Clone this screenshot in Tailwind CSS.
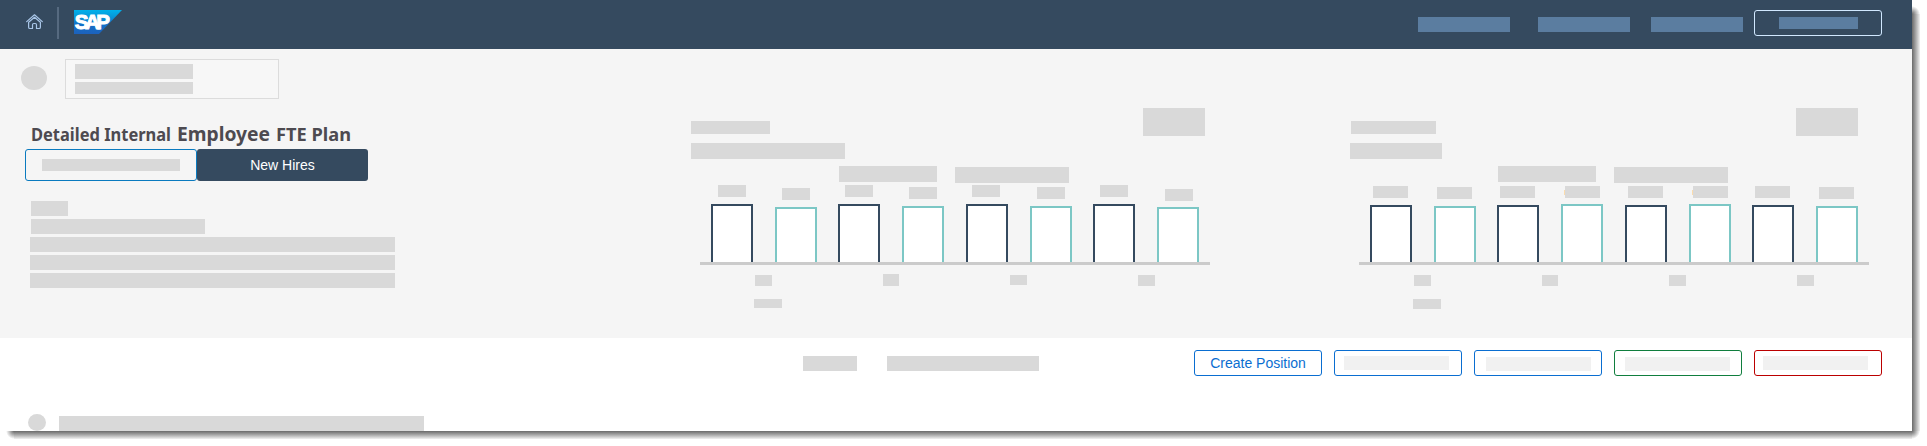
<!DOCTYPE html>
<html lang="en">
<head>
<meta charset="utf-8">
<title>Detailed Internal Employee FTE Plan</title>
<script src="https://cdn.jsdelivr.net/npm/@tailwindcss/browser@4"></script>
</head>
<body class="bg-white w-[1927px] h-[446px] overflow-hidden font-['Liberation_Sans',sans-serif]">
<div class="relative w-[1927px] h-[446px]">
  <!-- window drop shadow -->
  <div class="absolute left-[1912px] top-[14px] w-2 h-[417px] bg-linear-to-r from-[#6a6a6a] to-[#f2f2f2]"></div>
  <div class="absolute left-[14px] top-[431px] w-[1898px] h-2 bg-linear-to-b from-[#6a6a6a] to-[#f2f2f2]"></div>
  <div class="absolute left-[6px] top-[431px] w-2 h-2 bg-radial-[at_100%_0%] from-[#6a6a6a] to-white to-70%"></div>
  <div class="absolute left-[1912px] top-[431px] w-2 h-2 bg-radial-[at_0%_0%] from-[#6a6a6a] to-white to-70%"></div>
  <div class="absolute left-[1912px] top-[6px] w-2 h-2 bg-radial-[at_0%_100%] from-[#6a6a6a] to-white to-70%"></div>

  <main class="relative w-[1912px] h-[431px] bg-white overflow-hidden flex flex-col">
    <header class="h-[49px] shrink-0 bg-[#354a5f] flex items-start">
      <svg class="ml-[26px] mt-[14px] w-[17px] h-[16px]" viewBox="0 0 17 16" fill="none" stroke="#a9c6e8" stroke-width="1.2" stroke-linejoin="round" stroke-linecap="round"><path d="M.7 7.6 8.5.8l7.8 6.8"/><path d="M2.6 8.2v5c0 .9.5 1.3 1.3 1.3h2.6v-3.700c0-.9.6-1.300 1.300-1.300h1.400c.8 0 1.300.5 1.300 1.300v3.700h2.600c.9 0 1.300-.5 1.300-1.300v-5L8.500 3.300z"/></svg>
      <div class="ml-[14px] mt-[7px] w-[2px] h-8 bg-[#566a80]"></div>
      <svg class="ml-[15px] mt-[10px] w-12 h-6" viewBox="0 0 48 24"><defs><linearGradient id="g" x1="0" y1="0" x2="0" y2="1"><stop offset="0" stop-color="#00b1eb"/><stop offset=".25" stop-color="#069bdb"/><stop offset=".6" stop-color="#1170c8"/><stop offset="1" stop-color="#1d61bc"/></linearGradient></defs><path d="M0 0h48L25 24H0z" fill="url(#g)"/><text y="19" font-family="Liberation Sans" font-weight="700" font-size="20.500" fill="#fff" stroke="#fff" stroke-width="1"><tspan x=".8">S</tspan><tspan x="11">A</tspan><tspan x="22.200">P</tspan></text></svg>
      <div class="ml-auto mt-[17px] w-[92px] h-[15px] bg-[#5b7da0]"></div>
      <div class="ml-7 mt-[17px] w-[92px] h-[15px] bg-[#5b7da0]"></div>
      <div class="ml-[21px] mt-[17px] w-[92px] h-[15px] bg-[#5b7da0]"></div>
      <div class="ml-[11px] mr-[30px] mt-[10px] w-32 h-[26px] rounded-[3px] border border-[#d1e8ff] pl-6 pt-[6px]"><div class="w-[79px] h-3 bg-[#5b7da0]"></div></div>
    </header>

    <section class="h-[289px] shrink-0 bg-[#f5f5f5] flex items-start">
      <div class="w-[691px] shrink-0 flex flex-col">
        <div class="flex">
          <div class="ml-[21px] mt-[17px] w-[26px] h-6 rounded-[50%] bg-[#d9d9d9]"></div>
          <div class="ml-[18px] mt-[10px] w-[214px] h-10 border border-[#dcdcdc] bg-[#f7f7f7] pl-[9px] pt-1 flex flex-col gap-[3px]">
            <div class="w-[118px] h-[15px] bg-[#d9d9d9]"></div>
            <div class="w-[118px] h-3 bg-[#d9d9d9]"></div>
          </div>
        </div>
        <svg class="ml-[25px] mt-[20px] w-[343px] h-[30px]" fill="#4d4a50" font-family="Noto Sans" font-weight="700"><text x="6" y="22" font-size="18" textLength="140" lengthAdjust="spacingAndGlyphs">Detailed Internal</text><text x="152" y="22" font-size="20" textLength="93" lengthAdjust="spacingAndGlyphs">Employee</text><text x="251" y="22" font-size="18" textLength="75" lengthAdjust="spacingAndGlyphs">FTE Plan</text></svg>
        <div class="ml-[25px] flex">
          <div class="w-[172px] h-8 border border-[#0a7abf] rounded-[3px] pl-4 pt-[9px]"><div class="w-[138px] h-3 bg-[#d9d9d9]"></div></div>
          <div class="w-[171px] h-8 rounded-[3px] bg-[#354a5f] text-white text-sm leading-8 text-center">New Hires</div>
        </div>
        <div class="ml-[30px] mt-5 flex flex-col gap-[3px] *:h-[15px] *:bg-[#d9d9d9]">
          <div class="ml-px w-[37px]"></div>
          <div class="ml-px w-[174px]"></div>
          <div class="w-[365px]"></div>
          <div class="w-[365px]"></div>
          <div class="w-[365px]"></div>
        </div>
      </div>

      <!-- chart: left -->
      <div class="w-[659px] shrink-0 flex flex-col pt-[59px]">
        <div class="flex h-[51px]">
          <div class="w-[452px] pt-[13px]">
            <div class="w-[79px] h-[13px] bg-[#d9d9d9]"></div>
            <div class="mt-[9px] w-[154px] h-4 bg-[#d9d9d9]"></div>
          </div>
          <div class="w-[62px] h-7 bg-[#d9d9d9]"></div>
        </div>
        <div class="flex pl-[148px] pt-[7px] h-6 gap-[18px] *:h-4 *:bg-[#d9d9d9]">
          <div class="w-[98px]"></div><div class="mt-px w-[114px]"></div>
        </div>
        <div class="ml-[9px] w-[510px] h-[82px] border-b-3 border-[#cbcbcb] pl-[11px] flex items-end">
          <div class="w-[42px]"><div class="ml-[7px] mb-[7px] w-7 h-3 bg-[#d9d9d9]"></div><div class="h-[58px] bg-white border-2 border-b-0 border-[#354a5f]"></div></div>
          <div class="ml-[22px] w-[42px]"><div class="ml-[7px] mb-[7px] w-7 h-3 bg-[#d9d9d9]"></div><div class="h-[55px] bg-white border-2 border-b-0 border-[#7cc7c5]"></div></div>
          <div class="ml-[21px] w-[42px]"><div class="ml-[7px] mb-[7px] w-7 h-3 bg-[#d9d9d9]"></div><div class="h-[58px] bg-white border-2 border-b-0 border-[#354a5f]"></div></div>
          <div class="ml-[22px] w-[42px]"><div class="ml-[7px] mb-[7px] w-7 h-3 bg-[#d9d9d9]"></div><div class="h-[56px] bg-white border-2 border-b-0 border-[#7cc7c5]"></div></div>
          <div class="ml-[22px] w-[42px]"><div class="ml-[6px] mb-[7px] w-7 h-3 bg-[#d9d9d9]"></div><div class="h-[58px] bg-white border-2 border-b-0 border-[#354a5f]"></div></div>
          <div class="ml-[22px] w-[42px]"><div class="ml-[7px] mb-[7px] w-7 h-3 bg-[#d9d9d9]"></div><div class="h-[56px] bg-white border-2 border-b-0 border-[#7cc7c5]"></div></div>
          <div class="ml-[21px] w-[42px]"><div class="ml-[7px] mb-[7px] w-7 h-3 bg-[#d9d9d9]"></div><div class="h-[58px] bg-white border-2 border-b-0 border-[#354a5f]"></div></div>
          <div class="ml-[22px] w-[42px]"><div class="ml-[8px] mb-[6px] w-7 h-3 bg-[#d9d9d9]"></div><div class="h-[55px] bg-white border-2 border-b-0 border-[#7cc7c5]"></div></div>
        </div>
        <div class="pl-16 pt-[9px] h-[34px] flex gap-[111px] *:bg-[#d9d9d9]">
          <div class="mt-px w-[17px] h-[11px]"></div><div class="w-4 h-3"></div><div class="mt-px w-[17px] h-[10px]"></div><div class="mt-px w-[17px] h-[11px]"></div>
        </div>
        <div class="ml-[63px] w-7 h-[9px] bg-[#d9d9d9]"></div>
      </div>

      <!-- chart: right -->
      <div class="w-[562px] shrink-0 flex flex-col pt-[59px]">
        <div class="flex h-[51px]">
          <div class="w-[446px] pt-[13px]">
            <div class="ml-px w-[85px] h-[13px] bg-[#d9d9d9]"></div>
            <div class="mt-[9px] w-[92px] h-4 bg-[#d9d9d9]"></div>
          </div>
          <div class="w-[62px] h-7 bg-[#d9d9d9]"></div>
        </div>
        <div class="flex pl-[148px] pt-[7px] h-6 gap-[18px] *:h-4 *:bg-[#d9d9d9]">
          <div class="w-[98px]"></div><div class="mt-px w-[114px]"></div>
        </div>
        <div class="ml-[9px] w-[510px] h-[82px] border-b-3 border-[#cbcbcb] pl-[11px] flex items-end">
          <div class="w-[42px]"><div class="ml-[3px] mb-[7px] w-[35px] h-3 bg-[#d9d9d9]"></div><div class="h-[57px] bg-white border-2 border-b-0 border-[#354a5f]"></div></div>
          <div class="ml-[22px] w-[42px]"><div class="ml-[3px] mb-[7px] w-[35px] h-3 bg-[#d9d9d9]"></div><div class="h-[56px] bg-white border-2 border-b-0 border-[#7cc7c5]"></div></div>
          <div class="ml-[21px] w-[42px]"><div class="ml-[3px] mb-[7px] w-[35px] h-3 bg-[#d9d9d9]"></div><div class="h-[57px] bg-white border-2 border-b-0 border-[#354a5f]"></div></div>
          <div class="ml-[22px] w-[42px]"><div class="ml-[3px] mb-[6px] flex items-center"><div class="w-px h-[5px] bg-[#fbdcae]"></div><div class="w-[35px] h-3 bg-[#d9d9d9]"></div></div><div class="h-[58px] bg-white border-2 border-b-0 border-[#7cc7c5]"></div></div>
          <div class="ml-[22px] w-[42px]"><div class="ml-[3px] mb-[7px] w-[35px] h-3 bg-[#d9d9d9]"></div><div class="h-[57px] bg-white border-2 border-b-0 border-[#354a5f]"></div></div>
          <div class="ml-[22px] w-[42px]"><div class="ml-[3px] mb-[6px] flex items-center"><div class="w-px h-[5px] bg-[#fbdcae]"></div><div class="w-[35px] h-3 bg-[#d9d9d9]"></div></div><div class="h-[58px] bg-white border-2 border-b-0 border-[#7cc7c5]"></div></div>
          <div class="ml-[21px] w-[42px]"><div class="ml-[3px] mb-[7px] w-[35px] h-3 bg-[#d9d9d9]"></div><div class="h-[57px] bg-white border-2 border-b-0 border-[#354a5f]"></div></div>
          <div class="ml-[22px] w-[42px]"><div class="ml-[3px] mb-[7px] w-[35px] h-3 bg-[#d9d9d9]"></div><div class="h-[56px] bg-white border-2 border-b-0 border-[#7cc7c5]"></div></div>
        </div>
        <div class="pl-16 pt-[10px] h-[34px] flex gap-[111px] *:bg-[#d9d9d9] *:h-[11px]">
          <div class="w-[17px]"></div><div class="w-4"></div><div class="w-[17px]"></div><div class="w-[17px]"></div>
        </div>
        <div class="ml-[63px] w-7 h-[10px] bg-[#d9d9d9]"></div>
      </div>
    </section>

    <div class="h-[76px] shrink-0 pt-3 pr-[30px] flex items-start justify-end">
      <div class="mt-[6px] w-[54px] h-[15px] bg-[#d9d9d9]"></div>
      <div class="ml-[30px] mt-[6px] w-[152px] h-[15px] bg-[#d9d9d9]"></div>
      <div class="ml-[155px] flex gap-3">
        <div class="w-32 h-[26px] border border-[#0a6ed1] rounded-[3px] text-[#0a6ed1] text-sm leading-6 text-center">Create Position</div>
        <div class="w-32 h-[26px] border border-[#0a6ed1] rounded-[3px] pl-[9px] pt-[5px]"><div class="w-[105px] h-[14px] bg-[#f1f1f1]"></div></div>
        <div class="w-32 h-[26px] border border-[#0a6ed1] rounded-[3px] pl-[11px] pt-[6px]"><div class="w-[105px] h-[14px] bg-[#f1f1f1]"></div></div>
        <div class="w-32 h-[26px] border border-[#107e3e] rounded-[3px] pl-[10px] pt-[6px]"><div class="w-[105px] h-[14px] bg-[#f1f1f1]"></div></div>
        <div class="w-32 h-[26px] border border-[#b00] rounded-[3px] pl-[8px] pt-[5px]"><div class="w-[105px] h-[14px] bg-[#f1f1f1]"></div></div>
      </div>
    </div>
    <div class="flex pl-7 items-start">
      <div class="w-[18px] h-[17px] rounded-[50%] bg-[#d9d9d9]"></div>
      <div class="ml-[13px] mt-[2px] w-[365px] h-[15px] bg-[#d9d9d9]"></div>
    </div>
  </main>
</div>
</body>
</html>
